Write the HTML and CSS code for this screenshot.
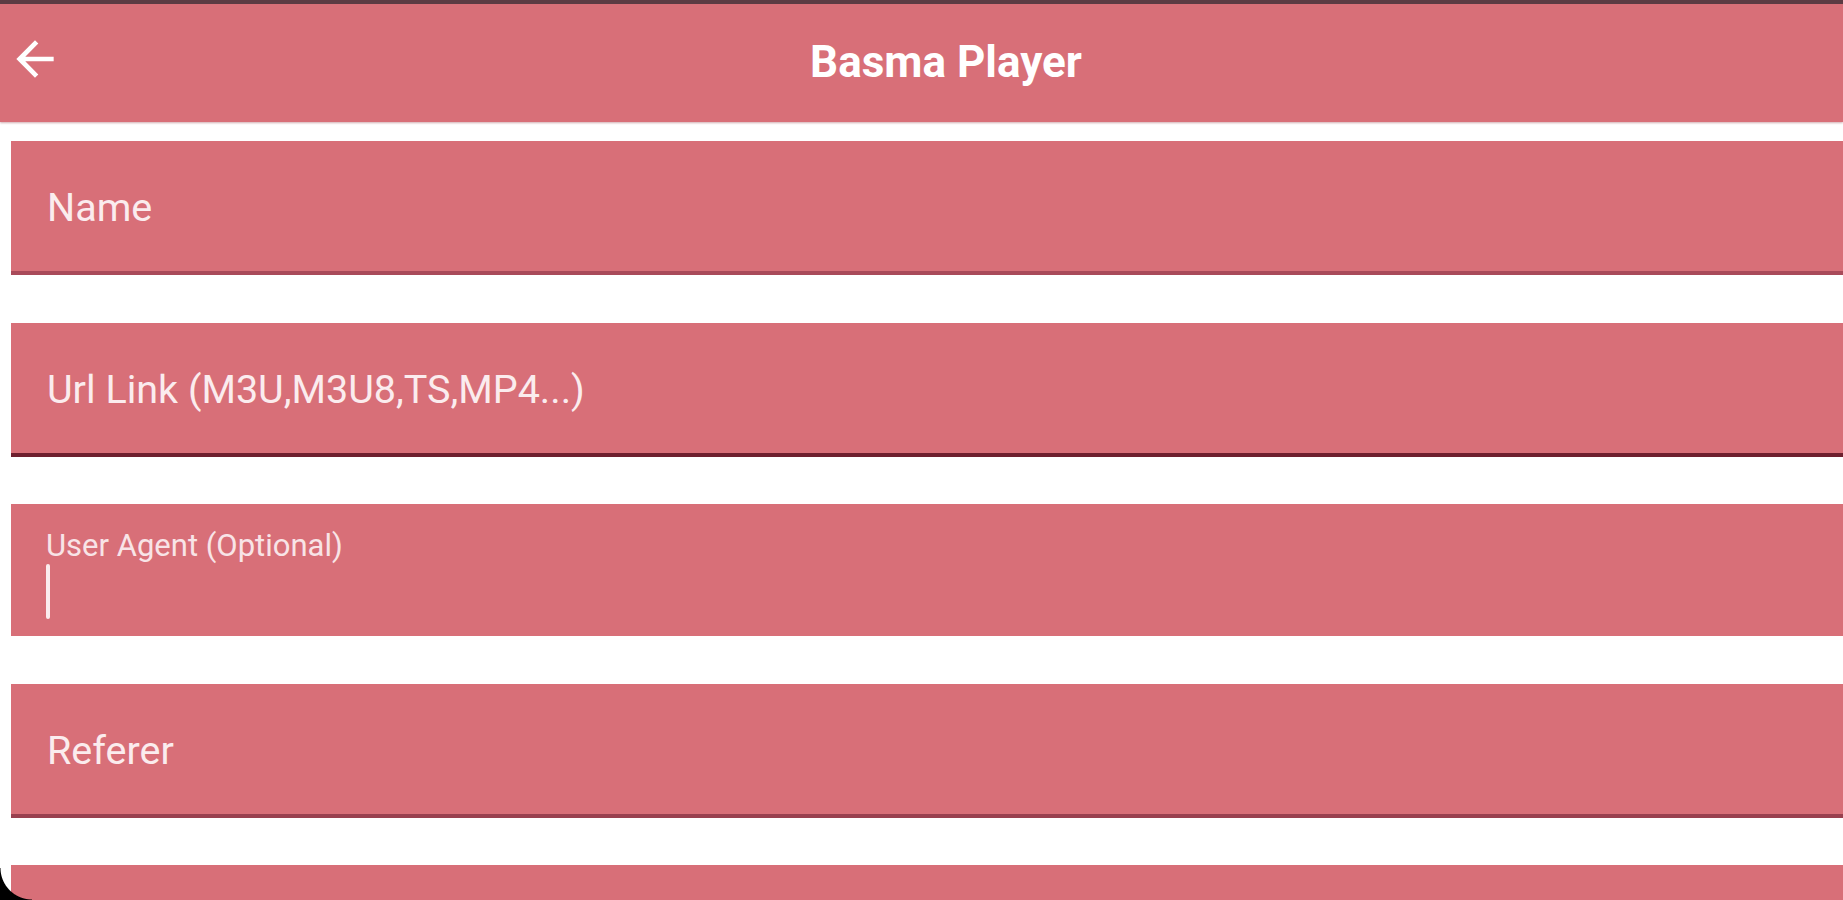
FILE: index.html
```html
<!DOCTYPE html>
<html lang="en">
<head>
<meta charset="utf-8">
<title>Basma Player</title>
<link rel="stylesheet" href="styles.css">
</head>
<body>
<div class="screen">
  <header class="appbar">
    <button class="back" aria-label="Back">
      <svg viewBox="0 0 24 24" width="56" height="56"><path d="M20 11H7.83l5.59-5.59L12 4l-8 8 8 8 1.41-1.41L7.83 13H20v-2z" fill="#ffffff"/></svg>
    </button>
    <h1 class="title">Basma Player</h1>
  </header>
  <main class="form">
    <div class="field line-soft"><span class="placeholder">Name</span></div>
    <div class="field line-dark"><span class="placeholder">Url Link (M3U,M3U8,TS,MP4...)</span></div>
    <div class="field focused">
      <span class="float-label">User Agent (Optional)</span>
      <span class="cursor"></span>
    </div>
    <div class="field line-mid"><span class="placeholder">Referer</span></div>
    <div class="field"></div>
  </main>
  <div class="corner"></div>
</div>
</body>
</html>
```
FILE: styles.css
```css
html, body {
  margin: 0;
  padding: 0;
  background: #ffffff;
  overflow: hidden;
}
body {
  font-family: Roboto, "Liberation Sans", sans-serif;
}
.screen {
  width: 1843px;
  height: 900px;
  overflow: hidden;
  border-top: 4px solid #5c3b43;
  box-sizing: border-box;
}
.appbar {
  height: 118px;
  background: #d86f78;
  display: flex;
  align-items: center;
  box-shadow: 0 1px 2px rgba(140, 50, 60, 0.4);
}
.back {
  border: 0;
  background: none;
  padding: 0;
  margin-left: 7px;
  width: 56px;
  height: 56px;
  display: flex;
  align-items: center;
  justify-content: center;
  transform: translateY(-4px);
}
.title {
  flex: 1;
  margin: 0;
  text-align: center;
  color: #ffffff;
  font-size: 44px;
  font-weight: 700;
  padding-right: 14px;
  transform: translateY(-1px);
}
.form {
  display: flex;
  flex-direction: column;
  gap: 47.5px;
  padding: 19px 0 0 11px;
}
.field {
  height: 134px;
  background: #d86f78;
  display: flex;
  align-items: center;
  padding-left: 36px;
  box-sizing: border-box;
  position: relative;
}
.line-soft { border-bottom: 4px solid #a94a5a; }
.line-dark { border-bottom: 4px solid #6e1f2e; }
.line-mid { border-bottom: 4px solid #99404f; }
.focused {
  height: 132px;
  flex-direction: column;
  align-items: flex-start;
  justify-content: flex-start;
  padding-top: 24px;
  padding-left: 35px;
}
.placeholder {
  color: #fbecee;
  font-size: 39.5px;
  line-height: 1;
  padding-top: 4px;
}
.float-label {
  color: #f8e4e7;
  font-size: 31px;
  line-height: 36px;
}
.cursor {
  display: block;
  width: 4px;
  height: 55px;
  margin-top: 0;
  margin-left: 0;
  background: #fbecee;
  border-radius: 2px;
}
.corner {
  position: fixed;
  left: 0;
  bottom: 0;
  width: 32px;
  height: 32px;
  background: radial-gradient(circle at 32px 0, transparent 31px, #000 32px);
}
```
